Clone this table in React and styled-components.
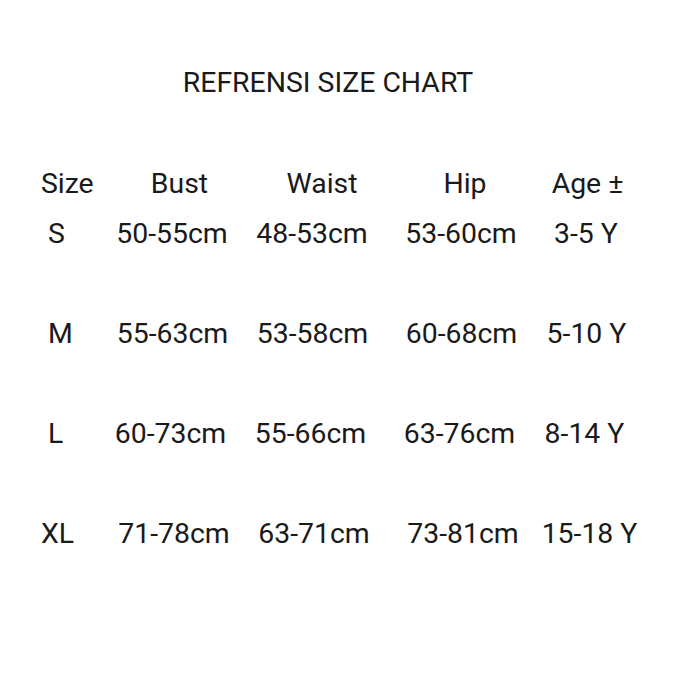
import React from 'react';
import styled, { createGlobalStyle } from 'styled-components';

const rows = [
  { size: 'S', bust: '50-55cm', waist: '48-53cm', hip: '53-60cm', age: '3-5 Y', nudge: 0 },
  { size: 'M', bust: '55-63cm', waist: '53-58cm', hip: '60-68cm', age: '5-10 Y', nudge: 1 },
  { size: 'L', bust: '60-73cm', waist: '55-66cm', hip: '63-76cm', age: '8-14 Y', nudge: -3 },
  { size: 'XL', bust: '71-78cm', waist: '63-71cm', hip: '73-81cm', age: '15-18 Y', nudge: 4 },
];

const SizeChart = () => {
  return (
    <Page>
      <GlobalStyle />
      <Title>REFRENSI SIZE CHART</Title>
      <Chart>
        <SizeCell>Size</SizeCell>
        <Cell $shift={15}>Bust</Cell>
        <Cell $shift={20}>Waist</Cell>
        <Cell $shift={8}>Hip</Cell>
        <Cell $shift={3}>Age ±</Cell>

        {rows.map((row) => (
          <React.Fragment key={row.size}>
            <SizeCell $indent={row.size.length === 1}>{row.size}</SizeCell>
            <Cell $shift={row.nudge}>{row.bust}</Cell>
            <Cell $shift={row.nudge}>{row.waist}</Cell>
            <Cell $shift={row.nudge}>{row.hip}</Cell>
            <Cell $shift={row.nudge + (row.size === 'XL' ? 3 : 0)}>{row.age}</Cell>
          </React.Fragment>
        ))}
      </Chart>
    </Page>
  );
};

export default SizeChart;

const GlobalStyle = createGlobalStyle`
  html, body {
    margin: 0;
    padding: 0;
    background: #ffffff;
  }

  body {
    font-family: Roboto, "Liberation Sans", sans-serif;
    color: #1a1a1a;
  }
`;

const Page = styled.div`
  width: 700px;
  height: 700px;
  box-sizing: border-box;
  padding-top: 58px;
  background: #ffffff;
`;

const Title = styled.h1`
  margin: 0 44px 51px 0;
  font-size: 28.4px;
  font-weight: 400;
  line-height: 50px;
  text-align: center;
`;

const Chart = styled.div`
  display: grid;
  grid-template-columns: 61px 140px 140px 158px 92px;
  grid-template-rows: 50px repeat(4, 100px);
  padding-left: 41px;
  align-items: start;
  font-size: 28.4px;
  line-height: 50px;
`;

const SizeCell = styled.div`
  padding-left: ${({ $indent }) => ($indent ? '7px' : '0')};
  white-space: nowrap;
`;

const Cell = styled.div`
  display: flex;
  justify-content: center;
  white-space: nowrap;
  padding-left: ${({ $shift }) => ($shift > 0 ? `${$shift}px` : '0')};
  padding-right: ${({ $shift }) => ($shift < 0 ? `${-$shift}px` : '0')};
`;
